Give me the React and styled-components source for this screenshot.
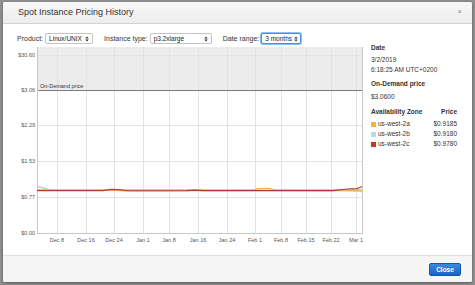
import React from 'react';
import styled, { createGlobalStyle } from 'styled-components';

//===
// Global
//===

const GlobalStyle = createGlobalStyle`
    html, body {
        margin: 0;
        padding: 0;
        background: #8f8f8f;
        font-family: "Liberation Sans", Arial, sans-serif;
    }
`

//===
// Styled
//===

const Page = styled.div`
    box-sizing: border-box;
    width: 475px;
    height: 285px;
    padding: 2px 3px 3px 3px;
`

const Modal = styled.div`
    height: 280px;
    display: flex;
    flex-direction: column;
    background: #fff;
    border-radius: 2px;
    box-shadow: 0 1px 3px rgba(0, 0, 0, 0.4);
    overflow: hidden;
`

const Header = styled.div`
    box-sizing: border-box;
    height: 22px;
    display: flex;
    align-items: center;
    justify-content: space-between;
    padding: 0 10px 2px 15px;
    background: linear-gradient(#f8f8f8, #ededed);
    border-bottom: 1px solid #d4d4d4;
`

const Title = styled.span`
    font-size: 9px;
    color: #333;
`

const Dismiss = styled.span`
    font-size: 8px;
    color: #8a8a8a;
    line-height: 1;
`

const Body = styled.div`
    flex: 1;
    padding: 9px 14px 0 14px;
`

const Controls = styled.div`
    display: flex;
    align-items: center;
    gap: 11px;
    height: 11px;
    font-size: 7px;
    color: #333;
    white-space: nowrap;
`

const Field = styled.label`
    display: flex;
    align-items: center;
    gap: 2px;
`

const SelectBox = styled.span`
    box-sizing: border-box;
    display: flex;
    align-items: center;
    justify-content: space-between;
    gap: 2px;
    width: ${p => p.$w}px;
    height: 11px;
    padding: 0 3px 0 3px;
    background: #fff;
    border: 1px solid ${p => (p.$focus ? '#4a8ee0' : '#c4c4c4')};
    box-shadow: ${p => (p.$focus ? '0 0 0 1px #8fbdf2' : 'none')};
    border-radius: 2px;
    font-size: 6.5px;
    color: #222;
    white-space: nowrap;
`

const Content = styled.div`
    display: flex;
    gap: 4px;
`

const ChartSvg = styled.svg`
    display: block;
    margin-top: 3px;
    font-family: "Liberation Sans", Arial, sans-serif;
`

const Side = styled.div`
    width: 86px;
    font-size: 6.5px;
    color: #333;
`

const SideLabel = styled.div`
    font-weight: bold;
    line-height: 8px;
    margin-top: ${p => p.$mt || 0}px;
`

const SideValue = styled.div`
    line-height: 10px;
    margin-top: ${p => p.$mt || 0}px;
`

const ZoneHead = styled.div`
    display: flex;
    justify-content: space-between;
    font-weight: bold;
    line-height: 8px;
    margin-top: 6px;
    margin-bottom: 3px;
`

const ZoneRow = styled.div`
    display: flex;
    align-items: center;
    line-height: 10px;
`

const Swatch = styled.span`
    width: 5px;
    height: 5px;
    margin-right: 2px;
    background: ${p => p.$c};
`

const ZoneName = styled.span`
    flex: 1;
`

const Footer = styled.div`
    box-sizing: border-box;
    height: 27px;
    display: flex;
    align-items: center;
    justify-content: flex-end;
    padding: 0 11px 0 0;
    background: #f5f5f5;
    border-top: 1px solid #dedede;
`

const CloseButton = styled.button`
    width: 32px;
    height: 13px;
    padding: 0;
    font-family: "Liberation Sans", Arial, sans-serif;
    font-size: 6.5px;
    font-weight: bold;
    color: #fff;
    background: linear-gradient(#3c8ae0, #1763c4);
    border: 1px solid #1255a8;
    border-radius: 2px;
`

//===
// Data
//===

const W = 350;
const H = 200;
const L = 20;
const R = 345;
const B = 186;
const GRAY_TOP = 43;

const yTicks = [
    { label: '$30.60', y: 8 },
    { label: '$3.06', y: 43 },
    { label: '$2.29', y: 78 },
    { label: '$1.53', y: 114 },
    { label: '$0.77', y: 150 },
    { label: '$0.00', y: 186 },
];

const xTicks = [
    ['Dec 8', 40], ['Dec 16', 69], ['Dec 24', 97], ['Jan 1', 126],
    ['Jan 8', 152], ['Jan 16', 181], ['Jan 24', 210], ['Feb 1', 238],
    ['Feb 8', 264], ['Feb 15', 289], ['Feb 22', 314], ['Mar 1', 339],
];

const blueLine = 'M20,139 L26,141 L33,143 L100,143.3 L108,144 L238,143.5 L330,143.6 L345,144.5';
const orangeLine = 'M20,143 L236,143 L242,141.6 L252,141.4 L258,143 L345,143';
const redLine = 'M20,143.6 L86,143.6 L94,142.4 L102,142.6 L110,143.8 L170,143.6 L178,143.1 L186,143.6 L316,143.6 L330,142 L340,141.6 L345,139.5';

const zones = [
    { name: 'us-west-2a', price: '$0.9185', color: '#f2b632' },
    { name: 'us-west-2b', price: '$0.9180', color: '#bcd6ee' },
    { name: 'us-west-2c', price: '$0.9780', color: '#c0392b' },
];

//===
// Component
//===

const Arrows = () => (
    <svg width="4" height="6" viewBox="0 0 4 6" style={{ flex: 'none' }}>
        <path d="M0.3,2.4 L2,0.5 L3.7,2.4 Z M0.3,3.6 L2,5.5 L3.7,3.6 Z" fill="#333" />
    </svg>
)

const Chart = () => (
    <ChartSvg width={W} height={H} viewBox={`0 0 ${W} ${H}`}>
        <rect x={L} y={0} width={R - L} height={GRAY_TOP} fill="#ececec" />
        {yTicks.map(t => (
            <g key={t.label}>
                <line x1={L} x2={R} y1={t.y + 0.5} y2={t.y + 0.5} stroke="#e4e4e4" strokeWidth="1" />
                <text x={18} y={t.y + 2} fontSize="5.5" fill="#555" textAnchor="end">{t.label}</text>
            </g>
        ))}
        {xTicks.map(([label, x]) => (
            <g key={label}>
                <line x1={x + 0.5} x2={x + 0.5} y1={0} y2={B} stroke="#e2e2e2" strokeWidth="1" />
                <text x={x} y={B + 9} fontSize="5.5" fill="#555" textAnchor="middle">{label}</text>
            </g>
        ))}
        <line x1={L} x2={R} y1={GRAY_TOP + 0.5} y2={GRAY_TOP + 0.5} stroke="#7a7a7a" strokeWidth="1" />
        <text x={L + 3} y={GRAY_TOP - 2} fontSize="5.5" fill="#333">On-Demand price</text>
        <line x1={L + 0.5} x2={L + 0.5} y1={0} y2={B} stroke="#c8c8c8" strokeWidth="1" />
        <line x1={R + 0.5} x2={R + 0.5} y1={0} y2={B} stroke="#c8c8c8" strokeWidth="1" />
        <line x1={L} x2={R + 1} y1={B + 0.5} y2={B + 0.5} stroke="#c8c8c8" strokeWidth="1" />
        <path d={blueLine} fill="none" stroke="#b9cfe8" strokeWidth="1.6" />
        <path d={orangeLine} fill="none" stroke="#f0b43c" strokeWidth="1.4" />
        <path d={redLine} fill="none" stroke="#b83a3a" strokeWidth="1.1" />
    </ChartSvg>
)

const App = () => {
    return (
        <>
        <GlobalStyle />
        <Page>
            <Modal>
                <Header>
                    <Title>Spot Instance Pricing History</Title>
                    <Dismiss>×</Dismiss>
                </Header>
                <Body>
                    <Controls>
                        <Field>
                            Product:
                            <SelectBox $w={48}>Linux/UNIX<Arrows /></SelectBox>
                        </Field>
                        <Field>
                            Instance type:
                            <SelectBox $w={62}>p3.2xlarge<Arrows /></SelectBox>
                        </Field>
                        <Field>
                            Date range:
                            <SelectBox $w={40} $focus>3 months<Arrows /></SelectBox>
                        </Field>
                    </Controls>
                    <Content>
                        <Chart />
                        <Side>
                            <SideLabel>Date</SideLabel>
                            <SideValue $mt={3}>3/2/2019<br />6:18:25 AM UTC+0200</SideValue>
                            <SideLabel $mt={5}>On-Demand price</SideLabel>
                            <SideValue $mt={4}>$3.0600</SideValue>
                            <ZoneHead>
                                <span>Availability Zone</span>
                                <span>Price</span>
                            </ZoneHead>
                            {zones.map(z => (
                                <ZoneRow key={z.name}>
                                    <Swatch $c={z.color} />
                                    <ZoneName>{z.name}</ZoneName>
                                    <span>{z.price}</span>
                                </ZoneRow>
                            ))}
                        </Side>
                    </Content>
                </Body>
                <Footer>
                    <CloseButton>Close</CloseButton>
                </Footer>
            </Modal>
        </Page>
        </>
    )
}

export default App
